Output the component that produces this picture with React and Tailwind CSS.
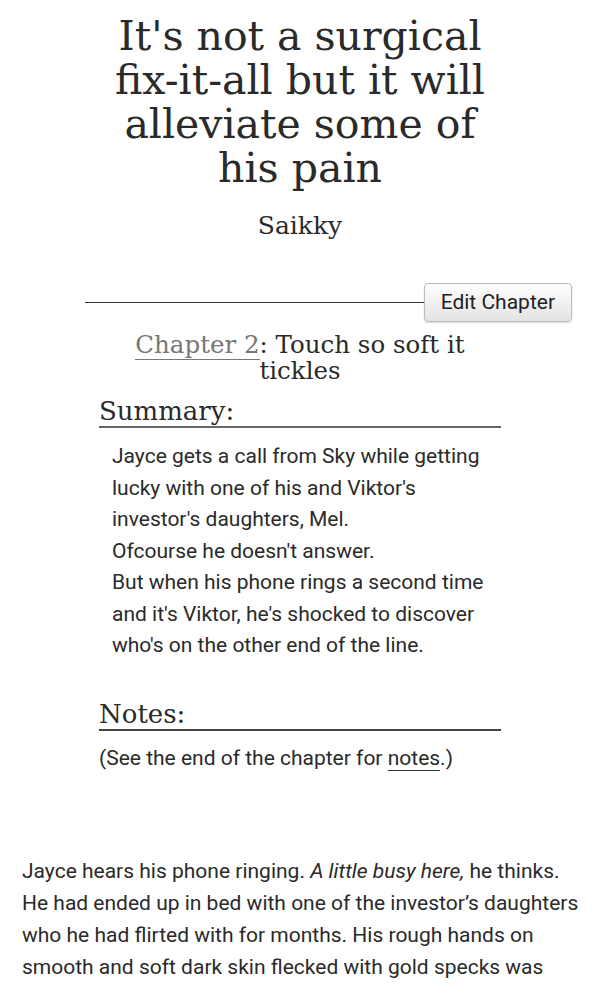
export default function App() {
  const serif = { fontFamily: '"DejaVu Serif", "Liberation Serif", serif' };
  return (
    <div className="min-h-[1000px] bg-white text-[#2a2a2a]" style={{ fontFamily: 'Roboto, "Liberation Sans", sans-serif' }}>
      <div className="pt-[14px] text-center" style={serif}>
        <h2 className="text-[41px] leading-[44px] font-normal text-[#2a2a2a]">
          It's not a surgical<br />fix-it-all but it will<br />alleviate some of<br />his pain
        </h2>
        <h3 className="mt-[21px] text-[25px] leading-[30px] text-[#2a2a2a]">Saikky</h3>
      </div>

      <div className="mt-[42px] ml-[85px] mr-[28px] flex items-center">
        <div className="flex-1 h-px bg-[#333]" />
        <button className="h-[39px] px-[16px] rounded-[4px] border border-[#bbb] bg-gradient-to-b from-white to-[#e3e3e3] text-[21px] text-[#222] shadow-[0_1px_2px_rgba(0,0,0,0.15)]">
          Edit Chapter
        </button>
      </div>

      <div className="mt-[10px] text-center text-[24.5px] leading-[26px]" style={serif}>
        <a className="text-[#777] border-b border-[#777]">Chapter 2</a>: Touch so soft it<br />tickles
      </div>

      <div className="mx-[99px] mt-[13px]">
        <h3 className="text-[26px] leading-[28px] border-b-2 border-[#666] pb-[1px]" style={serif}>Summary:</h3>
        <div className="pl-[13px] pt-[13px] text-[21px] leading-[31.5px]">
          <p>
            Jayce gets a call from Sky while getting<br />lucky with one of his and Viktor's<br />investor's daughters, Mel.<br />Ofcourse he doesn't answer.<br />But when his phone rings a second time<br />and it's Viktor, he's shocked to discover<br />who's on the other end of the line.
          </p>
        </div>

        <h3 className="mt-[38px] text-[26px] leading-[28px] border-b-2 border-[#444] pb-[1px]" style={serif}>Notes:</h3>
        <p className="pt-[12px] text-[21px] leading-[31.5px]">
          (See the end of the chapter for <a className="border-b border-[#333]">notes</a>.)
        </p>
      </div>

      <div className="mx-[22px] mt-[81px] text-[21px] leading-[32px] whitespace-nowrap">
        <p>
          Jayce hears his phone ringing. <em>A little busy here,</em> he thinks.<br />He had ended up in bed with one of the investor’s daughters<br />who he had flirted with for months. His rough hands on<br />smooth and soft dark skin flecked with gold specks was
        </p>
      </div>
    </div>
  );
}
